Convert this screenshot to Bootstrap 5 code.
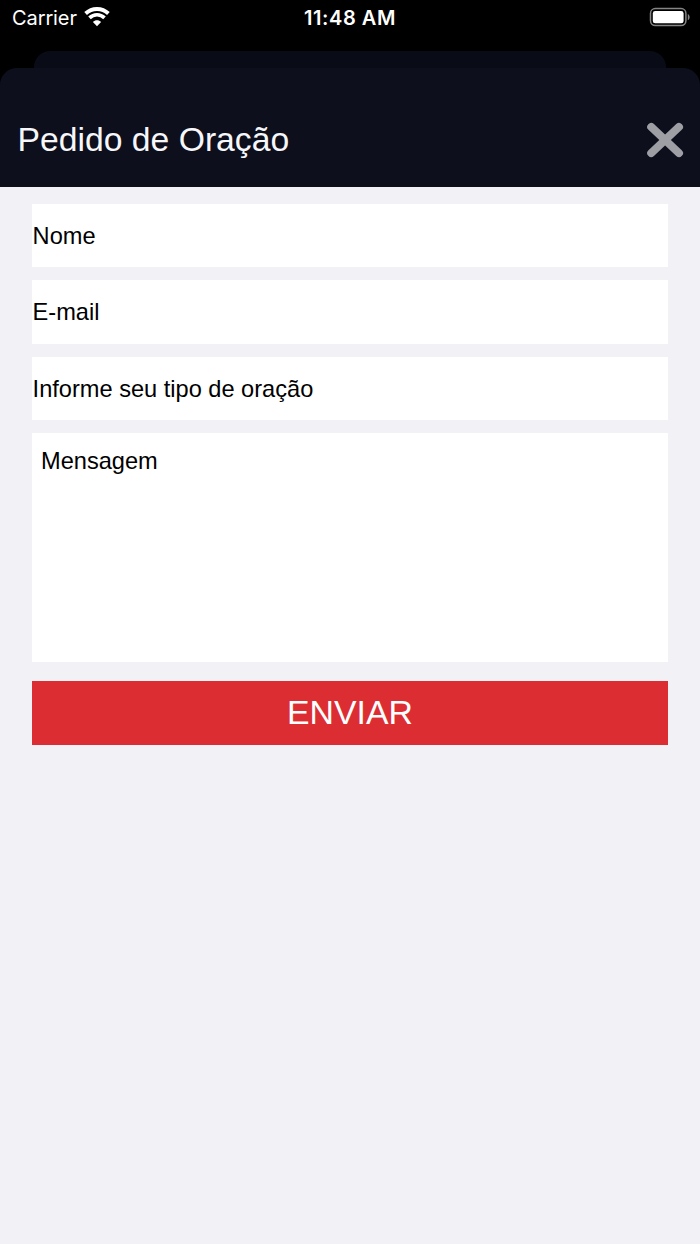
<!DOCTYPE html>
<html lang="pt-BR">
<head>
<meta charset="utf-8">
<meta name="viewport" content="width=device-width, initial-scale=1">
<title>Pedido de Oração</title>
<link href="https://cdn.jsdelivr.net/npm/bootstrap@5.3.0/dist/css/bootstrap.min.css" rel="stylesheet">
<style>
  body { background: #000; font-family: "Liberation Sans", Arial, sans-serif; min-height: 1244px; overflow: hidden; }
  .status-bar { height: 51px; font-family: Inter, sans-serif; font-size: 20px; line-height: 24px; padding: 6px 9px 0 12px; }
  .status-bar svg { display: block; }
  .carrier { width: 64px; letter-spacing: -.1px; }
  .clock { font-weight: 600; letter-spacing: .55px; margin-right: 3px; }
  .sheet-back { height: 17px; margin: 0 34px; background: #090b17; border-radius: 16px 16px 0 0; }
  .sheet-head { height: 119px; background: #0d0f1d; padding: 24px 16px 0 17.600px; border-radius: 17px 17px 0 0; }
  .sheet-head h1 { font-size: 33.7px; line-height: 40px; font-weight: 400; color: #f7f7fa; padding-bottom: 1px; }
  .close-btn { width: 38px; height: 36px; }
  .request-form { height: 1057px; background: #f2f1f6; padding: 16.6px 32px 0; gap: 13.2px; }
  .request-form .form-control { height: 63.4px; font-size: 23.6px; line-height: 28px; color: #000; background: #fff; padding: 2px 1px 0 .6px; }
  .request-form .form-control::placeholder { color: #000; opacity: 1; }
  .request-form textarea.form-control { height: 228.4px; padding: 14px 9px; resize: none; }
  .send-btn { height: 64px; margin-top: 6px; padding: 0 0 1px; background: #dc2d32; color: #fff; font-size: 33.8px; line-height: 40px; }
</style>
</head>
<body>
<div class="status-bar text-white d-flex align-items-start">
  <div class="col d-flex">
    <span class="carrier text-nowrap">Carrier</span>
    <svg class="ms-2" width="26" height="24" viewBox="0 0 26 24" fill="none" stroke="#fff">
      <path d="M1.600 7.500C8 1.400 18 1.400 24.400 7.500" stroke-width="3.9"/>
      <path d="M5.500 11.800c4.300-4.100 10.700-4.100 15 0" stroke-width="3.700"/>
      <path d="M13 20.200l-4.100-4.300c2.300-2.300 5.900-2.300 8.200 0z" fill="#fff" stroke="none"/>
    </svg>
  </div>
  <span class="clock">11:48 AM</span>
  <div class="col d-flex justify-content-end">
    <svg width="42" height="22" viewBox="0 0 42 22">
      <rect x="1.5" y="2.6" width="35.4" height="17" rx="4.8" fill="none" stroke="#858585" stroke-width="1.5"/>
      <rect x="3.8" y="5" width="30.8" height="12.3" rx="2.4" fill="#fff"/>
      <path d="M38.800 8c2.400 1.200 2.400 5 0 6.200z" fill="#858585"/>
    </svg>
  </div>
</div>
<div class="sheet-back"></div>
<main>
  <header class="sheet-head d-flex align-items-center justify-content-between">
    <h1 class="m-0">Pedido de Oração</h1>
    <button type="button" class="close-btn btn p-0 border-0 d-flex" aria-label="Fechar">
      <svg width="38" height="36" viewBox="0 0 38 36" stroke="#9e9fa4" stroke-width="8" stroke-linecap="round">
        <path d="M5.2 4.9 33 31.100M33 4.9 5.2 31.100"/>
      </svg>
    </button>
  </header>
  <form class="request-form d-flex flex-column">
    <input type="text" class="form-control border-0 rounded-0" placeholder="Nome" aria-label="Nome">
    <input type="email" class="form-control border-0 rounded-0" placeholder="E-mail" aria-label="E-mail">
    <input type="text" class="form-control border-0 rounded-0" placeholder="Informe seu tipo de oração" aria-label="Informe seu tipo de oração">
    <textarea class="form-control border-0 rounded-0" placeholder="Mensagem" aria-label="Mensagem"></textarea>
    <button type="button" class="send-btn btn w-100 border-0 rounded-0">ENVIAR</button>
  </form>
</main>
<script src="https://cdn.jsdelivr.net/npm/bootstrap@5.3.0/dist/js/bootstrap.bundle.min.js"></script>
</body>
</html>
